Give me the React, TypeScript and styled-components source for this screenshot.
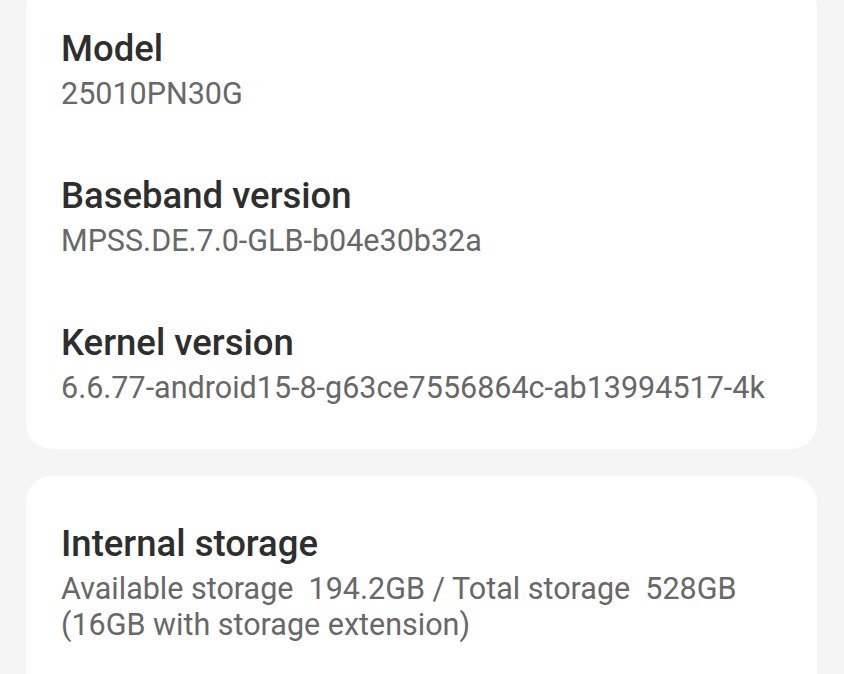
import styled, { createGlobalStyle } from "styled-components";

const GlobalStyle = createGlobalStyle`
  html, body {
    margin: 0;
    padding: 0;
    background: #f5f5f5;
  }
  body {
    font-family: Roboto, "Noto Sans", "Liberation Sans", sans-serif;
    -webkit-font-smoothing: antialiased;
  }
`;

const Screen = styled.div`
  display: flex;
  flex-direction: column;
  gap: 27px;
  padding: 0 27px 0 26px;
  height: 674px;
  overflow: hidden;
`;

// the list is scrolled, so the first card starts above the top edge
const Card = styled.section<{ $clipped?: boolean }>`
  background: #ffffff;
  border-radius: 26px;
  padding: 15px 35px 60px;
  margin-top: ${(p) => (p.$clipped ? "-18px" : "0")};
  padding-top: ${(p) => (p.$clipped ? "14px" : "15px")};
  padding-bottom: ${(p) => (p.$clipped ? "12px" : "60px")};
  flex-shrink: 0;
`;

const Item = styled.div`
  padding: 31px 0;
`;

const Title = styled.div`
  font-size: 36.5px;
  line-height: 44px;
  font-weight: 500;
  color: #2e2e2e;
`;

const Summary = styled.div`
  margin-top: 5px;
  font-size: 30.5px;
  line-height: 36px;
  font-weight: 400;
  color: #686868;
  white-space: pre-wrap;
`;

interface InfoRow {
  title: string;
  summary: string;
}

const phoneRows: InfoRow[] = [
  { title: "Model", summary: "25010PN30G" },
  { title: "Baseband version", summary: "MPSS.DE.7.0-GLB-b04e30b32a" },
  {
    title: "Kernel version",
    summary: "6.6.77-android15-8-g63ce7556864c-ab13994517-4k",
  },
];

export default function App() {
  return (
    <>
      <GlobalStyle />
      <Screen>
        <Card $clipped>
          {phoneRows.map((row) => (
            <Item key={row.title}>
              <Title>{row.title}</Title>
              <Summary>{row.summary}</Summary>
            </Item>
          ))}
        </Card>
        <Card>
          <Item>
            <Title>Internal storage</Title>
            <Summary>
              {"Available storage  194.2GB / Total storage  528GB (16GB with storage extension)"}
            </Summary>
          </Item>
        </Card>
      </Screen>
    </>
  );
}
